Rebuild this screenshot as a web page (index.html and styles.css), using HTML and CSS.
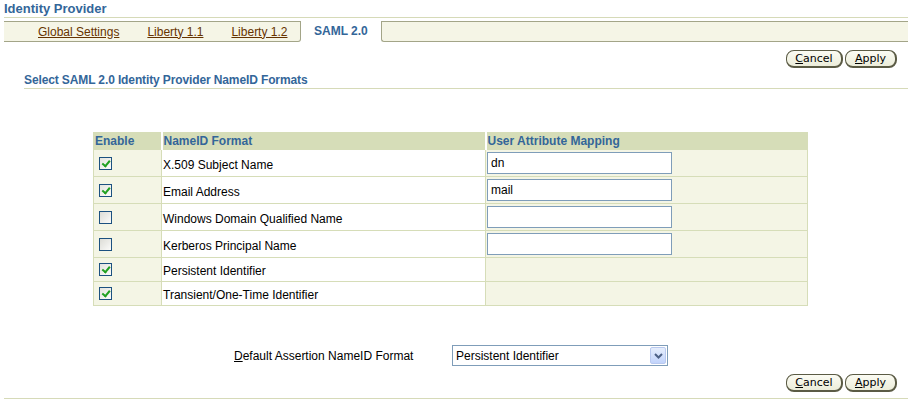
FILE: index.html
```html
<!DOCTYPE html>
<html lang="en">
<head>
    <meta charset="UTF-8">
    <title>Identity Provider</title>
    <link rel="stylesheet" href="styles.css">
</head>
<body>

    <!-- Page header -->
    <h1 class="page-title">Identity Provider</h1>

    <!-- Tab bar -->
    <div class="tabs">
        <div class="tab-strip tab-strip-left">
            <a href="#">Global Settings</a>
            <a href="#">Liberty 1.1</a>
            <a href="#">Liberty 1.2</a>
        </div>
        <div class="tab-current">SAML 2.0</div>
        <div class="tab-strip tab-strip-right"></div>
    </div>

    <div class="actions">
        <button class="btn"><u>C</u>ancel</button>
        <button class="btn"><u>A</u>pply</button>
    </div>

    <h2 class="section-title">Select SAML 2.0 Identity Provider NameID Formats</h2>

    <table class="formats">
        <tr>
            <th class="col-enable">Enable</th>
            <th class="col-format">NameID Format</th>
            <th class="col-mapping">User Attribute Mapping</th>
        </tr>
        <tr>
            <td class="cell-check"><span class="check on"></span></td>
            <td class="cell-name">X.509 Subject Name</td>
            <td class="cell-map"><input type="text" value="dn"></td>
        </tr>
        <tr>
            <td class="cell-check"><span class="check on"></span></td>
            <td class="cell-name">Email Address</td>
            <td class="cell-map"><input type="text" value="mail"></td>
        </tr>
        <tr>
            <td class="cell-check"><span class="check"></span></td>
            <td class="cell-name">Windows Domain Qualified Name</td>
            <td class="cell-map"><input type="text" value=""></td>
        </tr>
        <tr>
            <td class="cell-check"><span class="check"></span></td>
            <td class="cell-name">Kerberos Principal Name</td>
            <td class="cell-map"><input type="text" value=""></td>
        </tr>
        <tr class="short">
            <td class="cell-check"><span class="check on"></span></td>
            <td class="cell-name">Persistent Identifier</td>
            <td class="cell-map"></td>
        </tr>
        <tr class="short">
            <td class="cell-check"><span class="check on"></span></td>
            <td class="cell-name">Transient/One-Time Identifier</td>
            <td class="cell-map"></td>
        </tr>
    </table>

    <div class="default-row">
        <label class="default-label"><u>D</u>efault Assertion NameID Format</label>
        <div class="select">
            <span class="select-value">Persistent Identifier</span>
            <span class="select-arrow">
                <svg width="9" height="6" viewBox="0 0 9 6"><path d="M1 1 L4.5 4.5 L8 1" fill="none" stroke="#4d6185" stroke-width="2"/></svg>
            </span>
        </div>
    </div>

    <div class="actions actions-bottom">
        <button class="btn"><u>C</u>ancel</button>
        <button class="btn"><u>A</u>pply</button>
    </div>
    <div class="bottom-rule"></div>

</body>
</html>
```

FILE: styles.css
```css
* {
    margin: 0;
    padding: 0;
    box-sizing: border-box;
}

body {
    font-family: 'Liberation Sans', Arial, sans-serif;
    font-size: 12px;
    color: #000;
    background: #fff;
    padding-left: 4px;
}

.page-title {
    font-size: 13px;
    font-weight: bold;
    color: #336699;
    height: 18px;
    line-height: 16px;
    padding-top: 1px;
    border-bottom: 1px solid #d6dab8;
}

/* Tabs */
.tabs {
    display: flex;
    margin-top: 3px;
    height: 21px;
}

.tab-strip {
    background-color: #f5f5e6;
    border-top: 1px solid #a3a588;
    border-bottom: 1px solid #a3a588;
    height: 21px;
}

.tab-strip-left {
    flex: 0 0 297px;
    min-width: 0;
    overflow: hidden;
    padding-left: 34px;
    display: flex;
    align-items: center;
    border-right: 1px solid #a3a588;
    border-bottom-right-radius: 3px;
}

.tab-strip-left a {
    color: #663300;
    text-decoration: underline;
    margin-right: 28px;
    line-height: 14px;
    white-space: nowrap;
    flex: none;
}

.tab-strip-left a:last-child {
    margin-right: 0;
}

.tab-current {
    flex: 0 0 80px;
    padding-left: 13px;
    font-weight: bold;
    color: #336699;
    line-height: 21px;
}

.tab-strip-right {
    flex: 1;
    border-left: 1px solid #a3a588;
    border-bottom-left-radius: 3px;
}

/* Buttons */
.actions {
    display: flex;
    justify-content: flex-end;
    gap: 2px;
    padding-right: 11px;
    margin-top: 8px;
}

.btn {
    font-family: 'DejaVu Sans', Verdana, sans-serif;
    font-size: 11px;
    height: 18px;
    line-height: 14px;
    padding: 0 6px;
    background: linear-gradient(#fbfbf3, #ecedda);
    border: 1px solid #5b5b45;
    border-right-width: 2px;
    border-bottom-width: 2px;
    border-radius: 8px;
    color: #000;
}

.btn:first-child {
    width: 57px;
}

.btn:last-child {
    width: 52px;
}

.section-title {
    font-size: 12px;
    font-weight: bold;
    letter-spacing: -0.12px;
    color: #336699;
    margin: 5px 0 0 20px;
    line-height: 15px;
    height: 16px;
    border-bottom: 1px solid #d6dab8;
}

/* Formats table */
.formats {
    border-collapse: collapse;
    margin: 43px 0 0 89px;
    width: 715px;
}

.formats th {
    background-color: #d6ddb8;
    color: #336699;
    font-weight: bold;
    text-align: left;
    height: 17px;
    padding: 0 1px;
    line-height: 15px;
    border: 1px solid #d6ddb8;
    border-left: 2px solid #fff;
}

.formats th.col-enable {
    width: 68px;
    border-left: 1px solid #d6ddb8;
}

.formats th.col-format {
    width: 324px;
}

.formats td {
    border: 1px solid #d6ddb8;
    padding: 2px 1px;
    height: 27px;
    line-height: 16px;
    vertical-align: middle;
}

.formats tr.short td {
    height: 23px;
}

.cell-check {
    background-color: #f4f5e5;
    padding-left: 5px !important;
}

.cell-name {
    background-color: #fff;
    padding-top: 5px !important;
}

.cell-map {
    background-color: #f4f5e5;
}

.cell-map input {
    display: block;
    width: 185px;
    height: 22px;
    border: 1px solid #7f9db9;
    padding: 0 3px;
    font-family: 'Liberation Sans', Arial, sans-serif;
    font-size: 12px;
    background: #fff;
    color: #000;
}

.check {
    display: block;
    width: 13px;
    height: 13px;
    border: 1px solid #1c5180;
    background: linear-gradient(135deg, #dcdcd6, #fbfbf9);
    position: relative;
}

.check.on {
    background: linear-gradient(135deg, #e4e4de, #fcfcfa);
}

.check.on::after {
    content: "";
    position: absolute;
    left: 3px;
    top: 1px;
    width: 3px;
    height: 6px;
    border-right: 2px solid #21a121;
    border-bottom: 2px solid #21a121;
    transform: rotate(40deg);
    transform-origin: 60% 60%;
}

/* Default format select */
.default-row {
    display: flex;
    align-items: center;
    margin: 39px 0 0 230px;
}

.default-label {
    flex: 0 0 218px;
}

.select {
    flex: 0 0 216px;
    display: flex;
    align-items: center;
    justify-content: space-between;
    height: 21px;
    border: 1px solid #7f9db9;
    padding: 0 1px 0 3px;
    background: #fff;
}

.select-arrow {
    width: 16px;
    height: 17px;
    border: 1px solid #b9c9ef;
    border-radius: 2px;
    background: linear-gradient(#e6eefc, #c1d3fb);
    display: flex;
    align-items: center;
    justify-content: center;
}

.actions-bottom {
    margin-top: 8px;
}

.bottom-rule {
    margin-top: 6px;
    border-bottom: 1px solid #d6dab8;
}
```
